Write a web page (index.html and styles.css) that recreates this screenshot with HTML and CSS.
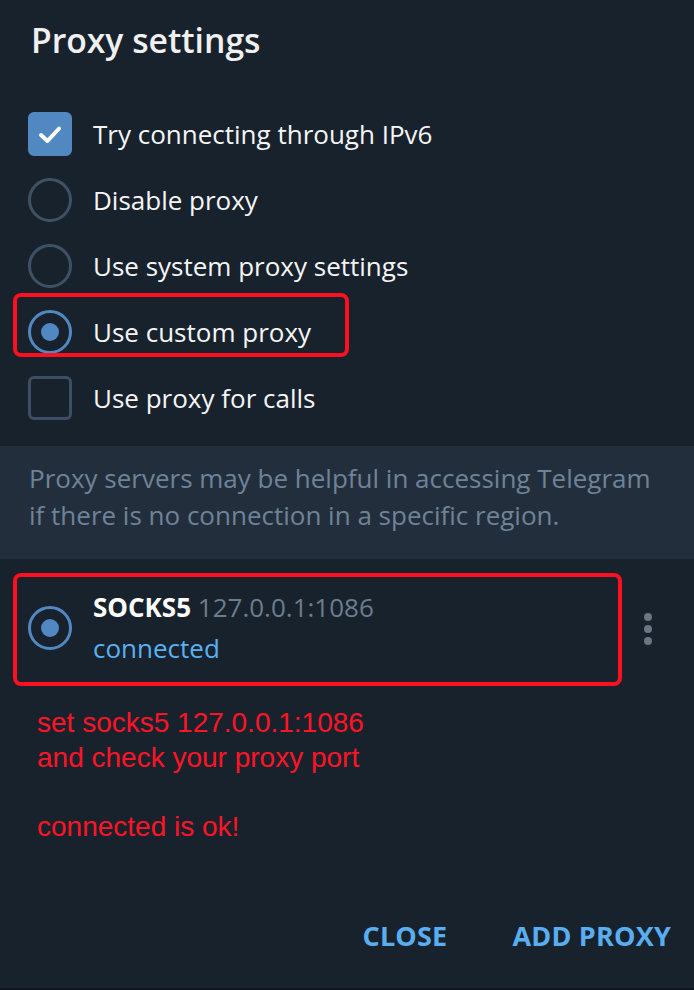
FILE: index.html
```html
<!DOCTYPE html>
<html>
<head>
<meta charset="utf-8">
<link rel="stylesheet" href="styles.css">
</head>
<body>
<div class="dialog">
  <h1 class="title">Proxy settings</h1>
  <div class="options">
    <div class="row">
      <span class="check checked"><svg viewBox="0 0 44 44" width="44" height="44"><path d="M13 23 L19.5 29 L31 16.5" fill="none" stroke="#fff" stroke-width="4" stroke-linecap="round" stroke-linejoin="round"/></svg></span>
      <span class="label">Try connecting through IPv6</span>
    </div>
    <div class="row">
      <span class="radio"></span>
      <span class="label">Disable proxy</span>
    </div>
    <div class="row">
      <span class="radio"></span>
      <span class="label">Use system proxy settings</span>
    </div>
    <div class="row annotated-a">
      <span class="radio on"></span>
      <span class="label">Use custom proxy</span>
    </div>
    <div class="row">
      <span class="check"></span>
      <span class="label">Use proxy for calls</span>
    </div>
  </div>
  <div class="about">Proxy servers may be helpful in accessing Telegram<br>if there is no connection in a specific region.</div>
  <div class="proxy annotated-b">
    <span class="radio on"></span>
    <div class="proxy-info">
      <div class="proxy-line"><b>SOCKS5</b> <span class="addr">127.0.0.1:1086</span></div>
      <div class="status">connected</div>
    </div>
    <span class="menu"><i></i><i></i><i></i></span>
  </div>
  <div class="note">set socks5 127.0.0.1:1086<br>and check your proxy port<br><br>connected is ok!</div>
  <div class="buttons">
    <span class="btn">CLOSE</span>
    <span class="btn">ADD PROXY</span>
  </div>
</div>
</body>
</html>
```
FILE: styles.css
```css
html, body {
  margin: 0;
  padding: 0;
  background: #17212b;
}
.dialog {
  width: 694px;
  height: 990px;
  box-sizing: border-box;
  background: #18222d;
  border-bottom: 2px solid #0f161d;
  font-family: "Open Sans", "Noto Sans", sans-serif;
  color: #f5f5f5;
  display: flex;
  flex-direction: column;
}
.title {
  margin: 0;
  height: 101px;
  box-sizing: border-box;
  padding: 16px 0 0 31px;
  font-size: 33.7px;
  font-weight: 600;
  line-height: 48px;
  color: #f0f0f0;
}
.options {
  display: flex;
  flex-direction: column;
}
.row {
  position: relative;
  height: 66px;
  display: flex;
  align-items: center;
  padding-left: 28px;
  gap: 21px;
}
.label {
  font-size: 26px;
  line-height: 32px;
}
.check {
  width: 44px;
  height: 44px;
  box-sizing: border-box;
  border: 3px solid #3c4e61;
  border-radius: 6px;
  display: block;
}
.check.checked {
  background: #5288c1;
  border-color: #5288c1;
}
.check svg {
  display: block;
  margin: -3px;
}
.radio {
  width: 44px;
  height: 44px;
  box-sizing: border-box;
  border: 3.5px solid #3f5265;
  border-radius: 50%;
  display: flex;
  align-items: center;
  justify-content: center;
  flex: none;
}
.radio.on {
  border-color: #5288c1;
}
.radio.on::before {
  content: "";
  width: 18px;
  height: 18px;
  border-radius: 50%;
  background: #5288c1;
}
.annotated-a::after {
  content: "";
  position: absolute;
  left: 13px;
  top: -6px;
  width: 336px;
  height: 64px;
  box-sizing: border-box;
  border: 4px solid #ff1020;
  border-radius: 8px;
}
.about {
  margin-top: 15px;
  background: #232e3c;
  padding: 14px 29px 25px;
  font-size: 26px;
  line-height: 37px;
  color: #6f8398;
}
.proxy {
  position: relative;
  height: 138px;
  display: flex;
  align-items: center;
  padding-left: 28px;
  gap: 21px;
}
.proxy-info {
  display: flex;
  flex-direction: column;
  flex: 1;
}
.proxy-line {
  font-size: 26px;
  line-height: 41px;
}
.proxy-line b {
  font-weight: 700;
  color: #ffffff;
}
.addr {
  color: #6c7d8e;
}
.status {
  font-size: 26px;
  line-height: 41px;
  color: #5ab1f2;
}
.menu {
  display: flex;
  flex-direction: column;
  gap: 4px;
  margin-right: 42px;
  margin-top: 2px;
}
.menu i {
  display: block;
  width: 8px;
  height: 8px;
  border-radius: 50%;
  background: #6a7683;
}
.annotated-b::after {
  content: "";
  position: absolute;
  left: 13px;
  top: 14px;
  width: 609px;
  height: 113px;
  box-sizing: border-box;
  border: 4px solid #ff1020;
  border-radius: 8px;
}
.note {
  padding: 9px 0 0 37px;
  font-family: "Liberation Sans", Arial, sans-serif;
  font-size: 28px;
  line-height: 34.5px;
  color: #ff1426;
  height: 190px;
  box-sizing: border-box;
}
.buttons {
  display: flex;
  justify-content: flex-end;
  align-items: center;
  gap: 65px;
  padding: 16px 23px 0 0;
  height: 80px;
  box-sizing: border-box;
}
.btn {
  font-size: 27px;
  font-weight: 700;
  color: #5aaef0;
  letter-spacing: 0.2px;
}
```
